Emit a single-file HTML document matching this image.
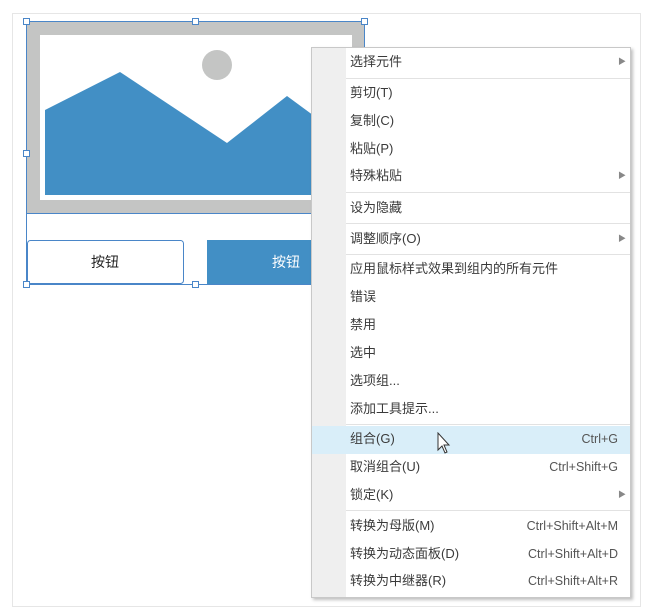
<!DOCTYPE html>
<html><head><meta charset="utf-8"><style>
*{margin:0;padding:0;box-sizing:border-box}
body{width:651px;height:615px;background:#fff;position:relative;overflow:hidden;font-family:"Liberation Sans","Noto Sans CJK SC",sans-serif}
.panel{position:absolute;left:12px;top:13px;width:629px;height:594px;border:1px solid #e6e6e6}
.h{position:absolute;width:7px;height:7px;background:#fff;border:1px solid #4a86c8}
.menu{position:absolute;left:311px;top:47px;width:320px;height:551px;background:#fff;border:1px solid #c8c8c8;box-shadow:2px 2px 3px rgba(0,0,0,.25)}
.gut{position:absolute;left:0;top:0;width:34px;height:100%;background:#efefef}
.r{position:absolute;left:34px;right:0;height:28px;font-size:13px;color:#3a3a3a;line-height:28px;padding-left:4px}
.r .k{position:absolute;right:12px;top:0;color:#555;font-size:12.5px}
.r .a{position:absolute;right:4px;top:0;color:#888;font-size:8px}
.s{position:absolute;left:34px;right:0;height:1px;background:#e2e2e2}
.hl{position:absolute;left:0;right:0;top:378px;height:28px;background:#d9eef9}
</style></head><body>
<div class="panel"></div>
<svg style="position:absolute;left:0;top:0" width="651" height="615">
<rect x="27" y="22" width="337" height="191" fill="#c4c5c4"/>
<rect x="40" y="35" width="312" height="165" fill="#fff"/>
<circle cx="217" cy="65" r="15" fill="#c4c5c4"/>
<polygon points="45,110 120,72 227,143 287,96 340,135 340,195 45,195" fill="#428fc5"/>
<rect x="26.5" y="213.5" width="338" height="71" fill="none" stroke="#4a86c8"/>
<rect x="27.5" y="240.5" width="156" height="43" rx="3" fill="#fff" stroke="#4a86c8"/>
<rect x="207" y="240" width="158" height="44" fill="#428fc5"/>
<rect x="26.5" y="21.5" width="338" height="263" fill="none" stroke="#4a86c8"/>
<text x="105" y="267" font-size="14" text-anchor="middle" fill="#222" font-family="Liberation Sans,Noto Sans CJK SC,sans-serif">按钮</text>
<text x="286" y="267" font-size="14" text-anchor="middle" fill="#fff" font-family="Liberation Sans,Noto Sans CJK SC,sans-serif">按钮</text>
</svg>
<div class="h" style="left:23px;top:18px"></div><div class="h" style="left:192px;top:18px"></div><div class="h" style="left:361px;top:18px"></div>
<div class="h" style="left:23px;top:150px"></div>
<div class="h" style="left:23px;top:281px"></div><div class="h" style="left:192px;top:281px"></div>
<div class="menu"><div class="gut"></div><div class="hl"></div>
<div class="r" style="top:0">选择元件<span class="a">▶</span></div>
<div class="s" style="top:30px"></div>
<div class="r" style="top:31px">剪切(T)</div>
<div class="r" style="top:59px">复制(C)</div>
<div class="r" style="top:87px">粘贴(P)</div>
<div class="r" style="top:114px">特殊粘贴<span class="a">▶</span></div>
<div class="s" style="top:144px"></div>
<div class="r" style="top:146px">设为隐藏</div>
<div class="s" style="top:175px"></div>
<div class="r" style="top:177px">调整顺序(O)<span class="a">▶</span></div>
<div class="s" style="top:206px"></div>
<div class="r" style="top:207px">应用鼠标样式效果到组内的所有元件</div>
<div class="r" style="top:235px">错误</div>
<div class="r" style="top:263px">禁用</div>
<div class="r" style="top:291px">选中</div>
<div class="r" style="top:319px">选项组...</div>
<div class="r" style="top:347px">添加工具提示...</div>
<div class="s" style="top:376px"></div>
<div class="r" style="top:377px">组合(G)<span class="k">Ctrl+G</span></div>
<div class="r" style="top:405px">取消组合(U)<span class="k">Ctrl+Shift+G</span></div>
<div class="r" style="top:433px">锁定(K)<span class="a">▶</span></div>
<div class="s" style="top:462px"></div>
<div class="r" style="top:464px">转换为母版(M)<span class="k">Ctrl+Shift+Alt+M</span></div>
<div class="r" style="top:492px">转换为动态面板(D)<span class="k">Ctrl+Shift+Alt+D</span></div>
<div class="r" style="top:519px">转换为中继器(R)<span class="k">Ctrl+Shift+Alt+R</span></div>
</div>
<svg style="position:absolute;left:437px;top:432px" width="16" height="24"><path d="M1,1 L1,18 L5,14 L8,21 L10,20 L7,13 L12,13 Z" fill="#fff" stroke="#333" stroke-width="1"/></svg>
</body></html>
